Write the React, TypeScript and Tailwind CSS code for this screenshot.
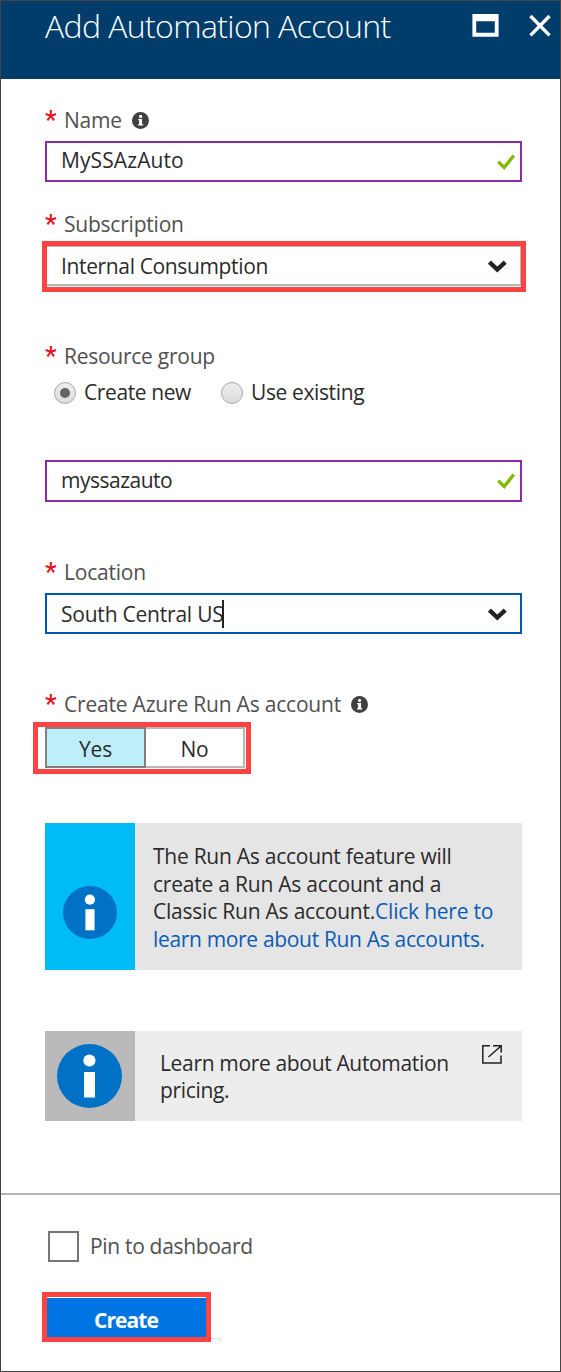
import type { ReactNode } from "react";

function InfoDot() {
  return (
    <svg className="mt-[5.5px] h-[17px] w-[17px] shrink-0" viewBox="0 0 17 17">
      <circle cx="8.5" cy="8.5" r="8.5" fill="#404040" />
      <circle cx="8.6" cy="4.4" r="1.6" fill="#fff" />
      <path d="M6.2 6.9H10.1V12.2H11.2V13.6H6V12.2H7.1V8.3H6.2Z" fill="#fff" />
    </svg>
  );
}

function BigInfo({ className }: { className: string }) {
  return (
    <svg className={className} viewBox="0 0 65 64" preserveAspectRatio="none">
      <ellipse cx="32.5" cy="32" rx="32.5" ry="32" fill="#0072c6" />
      <circle cx="32.4" cy="16.5" r="6.1" fill="#fff" />
      <path d="M27 28H38V53.5H27Z" fill="#fff" />
    </svg>
  );
}

function Check() {
  return (
    <svg className="h-[18px] w-5 shrink-0" viewBox="0 0 20 18" fill="none">
      <path d="M2.3 8.6L8.2 14.6L17.8 2.4" stroke="#7fba00" strokeWidth="3.3" />
    </svg>
  );
}

function Chevron() {
  return (
    <svg className="h-[14px] w-5 shrink-0" viewBox="0 0 20 14" fill="none">
      <path d="M2.4 3.2L10.3 10.6L18.2 3.2" stroke="#222" strokeWidth="4.4" />
    </svg>
  );
}

function FieldLabel({ children, info }: { children: ReactNode; info?: boolean }) {
  return (
    <div className="flex h-7 leading-7 whitespace-nowrap text-[#505050]">
      <span className="w-[19px] shrink-0 font-[Roboto] text-[26px] leading-7 font-medium text-[#e81123]">*</span>
      <span className="mr-[10px]">{children}</span>
      {info && <InfoDot />}
    </div>
  );
}

export default function App() {
  return (
    <div className="flex h-[1372px] w-[561px] flex-col overflow-hidden border border-[#444] bg-white font-['Open_Sans',sans-serif] text-[21px] tracking-[-0.22px] text-[#2b2b2b]">
      <header className="flex h-[78px] shrink-0 items-start bg-[#003d6b] pr-[9px] pl-11 text-white">
        <h1 className="mt-[5px] grow text-[32px] leading-10 font-light tracking-[-0.62px] whitespace-nowrap">
          Add Automation Account
        </h1>
        <svg className="mt-[13px] mr-[30px] h-[23px] w-[27px] shrink-0" viewBox="0 0 27 23">
          <path fillRule="evenodd" d="M0.4 0H26.6V22.7H0.4ZM4.2 7.2V18.8H22.8V7.2Z" fill="#fff" />
        </svg>
        <svg className="mt-[13px] h-[23px] w-[22px] shrink-0" viewBox="0 0 22 23" fill="none">
          <path d="M1.5 2L20.5 21.4M20.5 2L1.5 21.4" stroke="#fff" strokeWidth="3.4" />
        </svg>
      </header>

      <main className="flex shrink-0 flex-col pt-[27px] pr-[38px] pl-11">
        <FieldLabel info>Name</FieldLabel>
        <div className="mt-[7px] flex h-[41px] items-center justify-between border-2 border-[#8a2da5] pr-[4px] pl-[14px]">
          <span className="pb-[2px] tracking-[0.1px]">MySSAzAuto</span>
          <Check />
        </div>

        <div className="mt-7">
          <FieldLabel>Subscription</FieldLabel>
        </div>
        <div className="-mr-1 -ml-[3px] mt-[3px] h-[51px] border-[5px] border-[#ff4343] pb-px">
          <div className="flex h-10 items-center justify-between border-t border-r border-b-2 border-[#b5b5b5] pr-[13px] pl-[14px]">
            <span className="pt-[2px] tracking-[-0.36px]">Internal Consumption</span>
            <Chevron />
          </div>
        </div>

        <div className="mt-[50px]">
          <FieldLabel>
            <span className="tracking-[-0.26px]">Resource group</span>
          </FieldLabel>
        </div>
        <div className="mt-2 flex h-[30px] items-center pl-[9px]">
          <span className="flex size-[22px] items-center justify-center rounded-full border border-[#a8a8a8] bg-linear-to-b from-[#eee] to-[#dcdcdc]">
            <span className="size-[10px] rounded-full bg-[#636363]" />
          </span>
          <span className="ml-2 w-[137px] tracking-[-0.4px]">Create new</span>
          <span className="size-[22px] rounded-full border border-[#a8a8a8] bg-linear-to-b from-[#eee] to-[#dcdcdc]" />
          <span className="ml-2 tracking-[-0.38px]">Use existing</span>
        </div>
        <div className="mt-[52px] flex h-[42px] items-center justify-between border-2 border-[#8a2da5] pr-[4px] pl-[14px]">
          <span className="tracking-[-0.5px]">myssazauto</span>
          <Check />
        </div>

        <div className="mt-14">
          <FieldLabel>Location</FieldLabel>
        </div>
        <div className="mt-[7px] flex h-[41px] items-center border-2 border-[#0058ad] pr-[13px] pl-[14px]">
          <span className="pt-[2px]">South Central US</span>
          <span className="-ml-[2px] h-7 w-[2px] bg-[#222]" />
          <span className="grow" />
          <Chevron />
        </div>

        <div className="mt-14">
          <FieldLabel info>
            <span className="tracking-[-0.2px]">Create Azure Run As account</span>
          </FieldLabel>
        </div>
        <div className="mt-1 -ml-3 flex h-[52px] w-[218px] border-[5px] border-[#ff4343] pl-[7px]">
          <div className="flex h-[41px] w-[101px] items-center justify-center border-2 border-[#808080] bg-[#beeefa] pt-[2px] leading-7">
            Yes
          </div>
          <div className="flex h-[41px] w-[99px] items-center justify-center border-2 border-l-0 border-[#b8b8b8] pt-[2px] leading-7">
            No
          </div>
        </div>

        <div className="mt-[49px] flex h-[147px] bg-[#e5e5e5]">
          <div className="flex w-[90px] shrink-0 justify-center bg-[#00bcf6] pt-[63px]">
            <BigInfo className="h-[53px] w-[54px]" />
          </div>
          <p className="pt-5 pl-[18px] leading-[27.6px] whitespace-nowrap">
            <span className="tracking-[-0.26px]">The Run As account feature will</span>
            <br />
            create a Run As account and a
            <br />
            Classic Run As account.
            <span className="text-[#0a5cb5]">
              Click here to
              <br />
              <span className="tracking-[-0.33px]">learn more about Run As accounts.</span>
            </span>
          </p>
        </div>

        <div className="mt-[61px] flex h-[90px] bg-[#ededed]">
          <div className="flex w-[90px] shrink-0 bg-[#bababa] pt-[13px] pl-3">
            <BigInfo className="h-16 w-[65px]" />
          </div>
          <p className="grow pt-[19px] pl-[25px] leading-[27.4px] tracking-[-0.34px] whitespace-nowrap">
            Learn more about Automation
            <br />
            pricing.
          </p>
          <svg className="mt-[13px] mr-5 h-5 w-5 shrink-0" viewBox="0 0 20 20" fill="none" stroke="#222" strokeWidth="1.5">
            <path d="M8 1.8H0.8V18.9H19V11.5M11 1.8H19.2V8.6M6.5 13L19 2" />
          </svg>
        </div>
      </main>

      <footer className="mt-[72px] flex shrink-0 flex-col border-t-2 border-[#b5b5b5] pt-9 pl-[41px]">
        <div className="flex h-[31px] items-center pl-[6px] text-[#505050]">
          <span className="size-[31px] border-2 border-[#767676]" />
          <span className="ml-[11px] pt-px tracking-[-0.32px]">Pin to dashboard</span>
        </div>
        <div className="mt-[30px] flex items-end">
          <div className="h-[50px] w-[169px] border-[5px] border-[#ff4343] pt-px">
            <div className="flex h-[39px] items-center justify-center bg-[#0074e3] pt-[7px] pr-px text-[21px] font-bold tracking-[-0.95px] text-white">
              Create
            </div>
          </div>
          <div className="h-1 w-[10px] border-t border-r border-[#e4e4e4]" />
        </div>
      </footer>
    </div>
  );
}
